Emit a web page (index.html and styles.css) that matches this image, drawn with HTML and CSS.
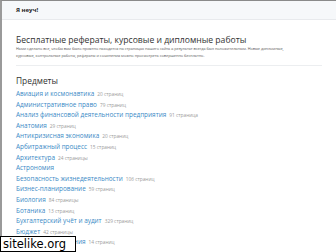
FILE: index.html
```html
<!DOCTYPE html>
<html lang="ru">
<head>
<meta charset="utf-8">
<link rel="stylesheet" href="styles.css">
</head>
<body>
<div class="frame">
  <header class="topbar"><span class="logo">Я неуч!</span></header>
  <main class="content">
    <h1 class="title">Бесплатные рефераты, курсовые и дипломные работы</h1>
    <p class="intro">Нами сделано все, чтобы вам было приятно находится на страницах нашего сайта а результат всегда был положительным. Новые дипломные, курсовые, контрольные работы, рефераты и сочинения можно просмотреть совершенно бесплатно.</p>
    <hr class="sep">
    <h2 class="subtitle">Предметы</h2>
    <ul class="list">
      <li><a>Авиация и космонавтика</a><span class="cnt">20 страниц</span></li>
      <li><a>Административное право</a><span class="cnt">79 страниц</span></li>
      <li><a>Анализ финансовой деятельности предприятия</a><span class="cnt">91 страница</span></li>
      <li><a>Анатомия</a><span class="cnt">29 страниц</span></li>
      <li><a>Антикризисная экономика</a><span class="cnt">20 страниц</span></li>
      <li><a>Арбитражный процесс</a><span class="cnt">15 страниц</span></li>
      <li><a>Архитектура</a><span class="cnt">24 страницы</span></li>
      <li><a>Астрономия</a></li>
      <li><a>Безопасность жизнедеятельности</a><span class="cnt">106 страниц</span></li>
      <li><a>Бизнес-планирование</a><span class="cnt">59 страниц</span></li>
      <li><a>Биология</a><span class="cnt">84 страницы</span></li>
      <li><a>Ботаника</a><span class="cnt">13 страниц</span></li>
      <li><a>Бухгалтерский учёт и аудит</a><span class="cnt">329 страниц</span></li>
      <li><a>Бюджет</a><span class="cnt">42 страницы</span></li>
      <li><a>Валютные отношения</a><span class="cnt">14 страниц</span></li>
    </ul>
  </main>
</div>
<div class="watermark">sitelike.org</div>
</body>
</html>
```
FILE: styles.css
```css
html, body {
  margin: 0;
  padding: 0;
  width: 336px;
  height: 252px;
  overflow: hidden;
  background: #fff;
  font-family: "Open Sans", "Liberation Sans", sans-serif;
}
.frame {
  border-top: 1px solid #8a8a8a;
  border-left: 2px solid #9a9a9a;
  height: 252px;
  box-sizing: border-box;
}
.topbar {
  height: 18px;
  background: #f6f8fa;
  border-bottom: 1px solid #e8eaed;
  display: flex;
  align-items: center;
  padding-left: 14px;
}
.logo {
  font-size: 6px;
  font-weight: 700;
  color: #222;
}
.content {
  padding: 0 14px;
}
.title {
  margin: 14px 0 0;
  font-size: 8.6px;
  font-weight: 400;
  color: #333;
  line-height: 12px;
}
.intro {
  margin: 0;
  font-size: 3.8px;
  line-height: 6.5px;
  color: #555;
  width: 286px;
}
.sep {
  margin: 6px 0 0;
  border: 0;
  border-top: 1px solid #eceef0;
}
.subtitle {
  margin: 9px 0 0;
  font-size: 8.4px;
  font-weight: 400;
  color: #333;
  line-height: 11px;
}
.list {
  list-style: none;
  margin: 3px 0 0;
  padding: 0;
}
.list li {
  display: flex;
  align-items: baseline;
  gap: 3px;
  height: 10.6px;
  white-space: nowrap;
}
.list a {
  font-size: 6.4px;
  line-height: 10.6px;
  color: #3a8ac6;
}
.cnt {
  font-size: 4.8px;
  line-height: 6px;
  color: #9a9a9a;
}
.watermark {
  position: absolute;
  left: 0;
  top: 236px;
  width: 76px;
  height: 16px;
  box-sizing: border-box;
  background: #fff;
  border: 1px solid #000;
  font-family: "DejaVu Sans", sans-serif;
  font-size: 11.5px;
  line-height: 14px;
  color: #000;
  padding-left: 2px;
}
```
